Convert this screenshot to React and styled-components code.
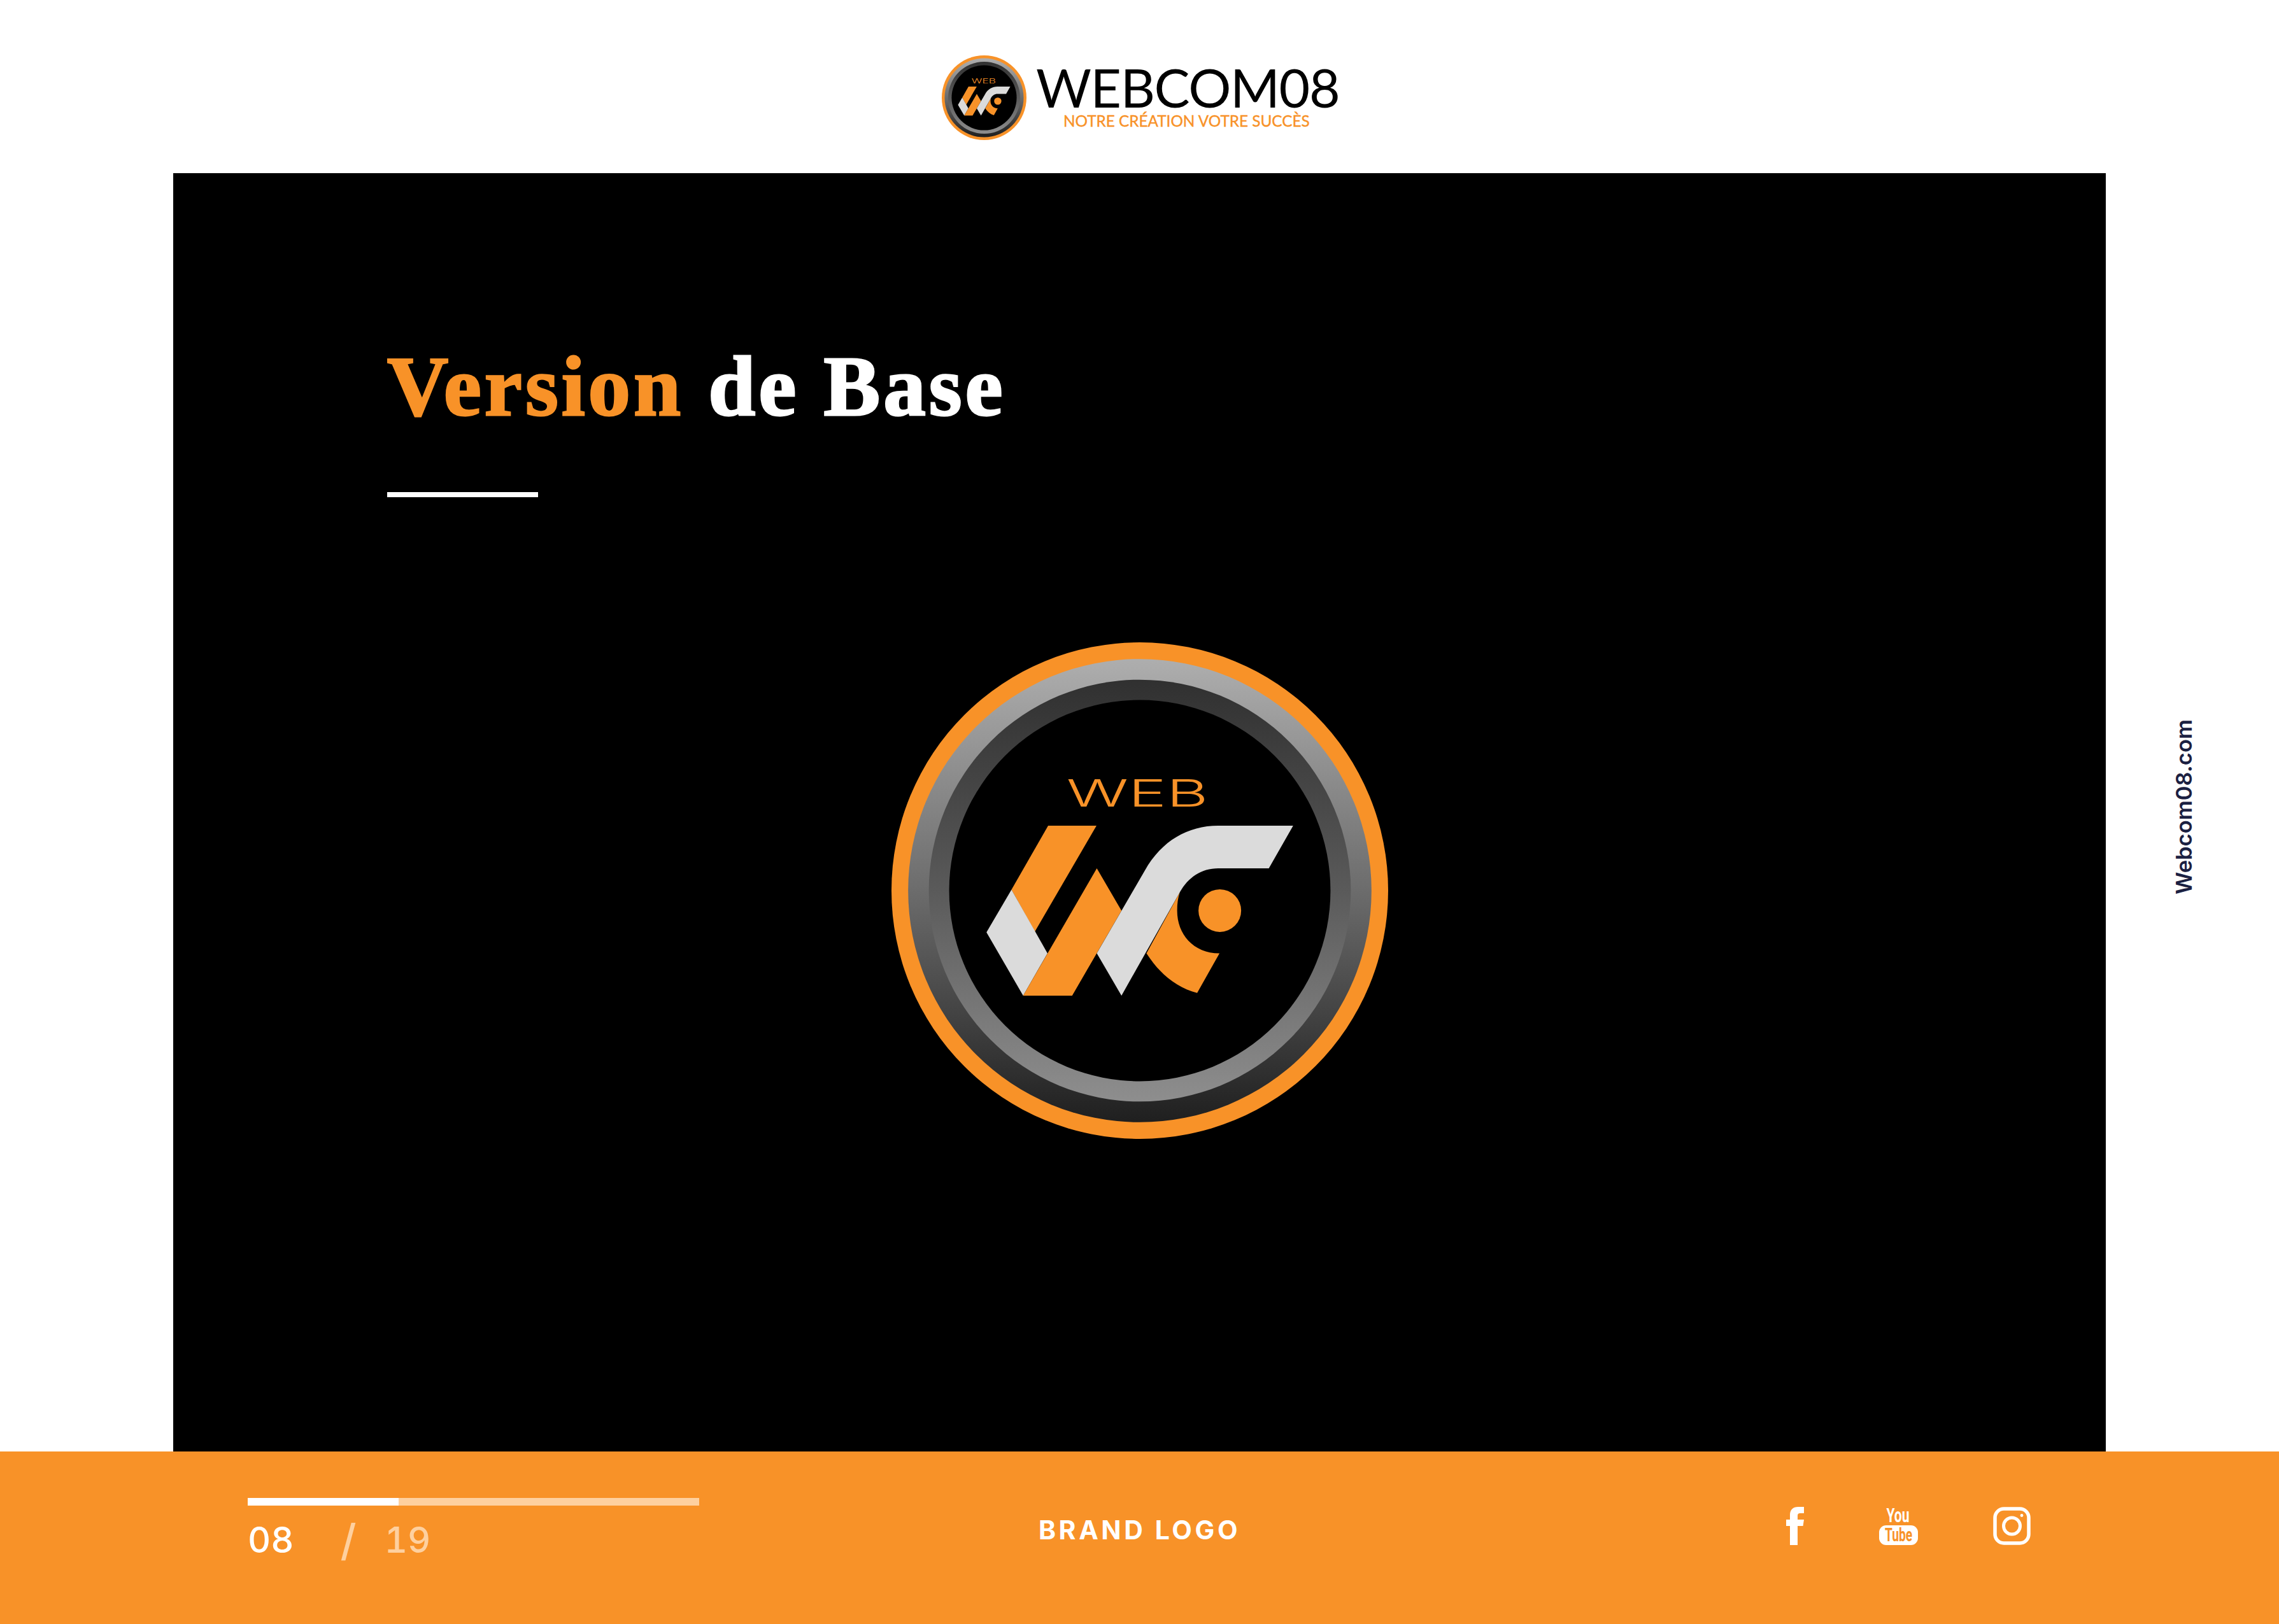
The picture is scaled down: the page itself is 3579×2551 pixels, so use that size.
import React from "react";
import styled, { createGlobalStyle } from "styled-components";

const ORANGE = "#f89228";

const GlobalStyle = createGlobalStyle`
  html, body {
    margin: 0;
    padding: 0;
    background: #fff;
  }
  * {
    box-sizing: border-box;
  }
`;

const Page = styled.div`
  display: grid;
  grid-template-rows: 272px 2008px 271px;
  width: 3579px;
  height: 2551px;
  overflow: hidden;
  background: #fff;
`;

const Header = styled.header`
  display: flex;
  align-items: flex-start;
  padding: 87px 0 0 1479px;
`;

const Brand = styled.div`
  display: flex;
  flex-direction: column;
  margin-left: 15px;
`;

const BrandName = styled.div`
  margin-top: 18px;
  font-family: Lato, sans-serif;
  font-size: 84px;
  font-weight: 400;
  line-height: 64px;
  letter-spacing: -1.4px;
  color: #000;
  white-space: nowrap;
`;

const BrandTagline = styled.div`
  margin: 9px 0 0 43px;
  font-family: Lato, sans-serif;
  font-size: 24.3px;
  font-weight: 400;
  line-height: 24px;
  color: ${ORANGE};
  -webkit-text-stroke: 0.4px currentColor;
  white-space: nowrap;
`;

const Middle = styled.div`
  display: grid;
  grid-template-columns: 272px 3035px 1fr;
`;

const Panel = styled.main`
  grid-column: 2;
  display: flex;
  flex-direction: column;
  padding: 269px 0 0 336px;
  background: #000;
`;

const Title = styled.h1`
  margin: 0;
  font-family: "Liberation Serif", serif;
  font-size: 133px;
  font-weight: 700;
  line-height: 133px;
  letter-spacing: 5px;
  color: #fff;
  -webkit-text-stroke: 3px currentColor;
  white-space: nowrap;
`;

const TitleAccent = styled.span`
  color: ${ORANGE};
`;

const TitleRule = styled.div`
  width: 237px;
  height: 8px;
  margin-top: 99px;
  background: #fff;
`;

const MainLogo = styled.div`
  display: flex;
  justify-content: center;
  margin: 228px 0 0 -336px;
`;

const Side = styled.aside`
  display: flex;
  align-items: center;
  justify-content: center;
  padding: 0 28px 18px 0;
`;

const SideText = styled.span`
  writing-mode: vertical-rl;
  transform: rotate(180deg);
  font-family: Inter, sans-serif;
  font-size: 34.5px;
  font-weight: 600;
  line-height: 35px;
  color: #1b2041;
  white-space: nowrap;
`;

const Footer = styled.footer`
  display: grid;
  grid-template-columns: 1fr auto 1fr;
  background: ${ORANGE};
`;

const Progress = styled.div`
  display: flex;
  flex-direction: column;
  padding: 73px 0 0 389px;
`;

const Track = styled.div`
  width: 709px;
  height: 12px;
  background: #fed09f;
`;

const Fill = styled.div`
  height: 100%;
  background: #fff;
`;

const Pager = styled.div`
  display: flex;
  align-items: center;
  height: 56px;
  margin-top: 26px;
  font-family: Inter, sans-serif;
  font-size: 56px;
  font-weight: 500;
  line-height: 56px;
  font-feature-settings: "tnum";
`;

const PagerCurrent = styled.span`
  color: #fff;
`;

const PagerSlash = styled.span`
  margin-left: 73px;
  font-size: 68px;
  font-weight: 500;
  color: #fed09f;
`;

const PagerTotal = styled.span`
  margin-left: 44px;
  color: #fed09f;
`;

const FooterLabel = styled.div`
  padding-top: 100px;
  font-family: Inter, sans-serif;
  font-size: 41px;
  font-weight: 700;
  line-height: 46px;
  letter-spacing: 4.6px;
  color: #fff;
  white-space: nowrap;
`;

const Socials = styled.div`
  display: flex;
  align-items: flex-start;
  justify-content: flex-end;
  gap: 118px;
  padding: 87px 390px 0 0;
`;

const SocialIcon = styled.svg`
  display: block;
  flex: none;
  overflow: visible;
`;

function WcLogo({ size, id }) {
  return (
    <svg width={size} height={size} viewBox="40 50 1490 1490">
      <defs>
        <linearGradient id={`${id}-outer`} x1="0" y1="0" x2="0" y2="1">
          <stop offset="0" stopColor="#aeaeae" />
          <stop offset="0.5" stopColor="#6c6c6c" />
          <stop offset="1" stopColor="#1f1f1f" />
        </linearGradient>
        <linearGradient id={`${id}-inner`} x1="0" y1="0" x2="0" y2="1">
          <stop offset="0" stopColor="#303030" />
          <stop offset="0.5" stopColor="#5a5a5a" />
          <stop offset="1" stopColor="#8e8e8e" />
        </linearGradient>
      </defs>
      <circle cx="785" cy="795" r="745" fill={ORANGE} />
      <circle cx="785" cy="795" r="695" fill={`url(#${id}-outer)`} />
      <circle cx="785" cy="795" r="633" fill={`url(#${id}-inner)`} />
      <circle cx="785" cy="795" r="572" fill="#000" />
      <text
        x="565"
        y="543"
        textLength="425"
        lengthAdjust="spacingAndGlyphs"
        fontFamily="Inter, sans-serif"
        fontSize="112"
        fontWeight="350"
        fill={ORANGE}
      >
        WEB
      </text>
      <path d="M510 600H655L470 918L400 792Z" fill={ORANGE} />
      <path d="M400 792L508 983L435 1110L325 920Z" fill="#dbdbdb" />
      <path d="M656 728L730 855L582 1110H435Z" fill={ORANGE} />
      <path
        d="M905 800L805 983C845 1045 895 1086 957 1102L1024 983C945 983 897 925 897 855C897 835 899 818 905 800Z"
        fill={ORANGE}
      />
      <path
        d="M1245 600H1020C930 600 850 645 800 735L656 983L730 1110L905 800C930 755 970 728 1020 728H1172Z"
        fill="#dbdbdb"
      />
      <circle cx="1025" cy="855" r="64" fill={ORANGE} />
    </svg>
  );
}

function FacebookIcon() {
  return (
    <SocialIcon width="28" height="60" viewBox="0 0 28 60">
      <path
        d="M6 60V30H0V20H6V13C6 4 11 0 19 0H28V10H22C19 10 18 11.5 18 14V20H28L26.5 30H18V60Z"
        fill="#fff"
      />
    </SocialIcon>
  );
}

function YoutubeIcon() {
  return (
    <SocialIcon width="61" height="60" viewBox="0 0 61 60">
      <text
        x="11.5"
        y="24"
        textLength="36"
        lengthAdjust="spacingAndGlyphs"
        fontFamily="Roboto, sans-serif"
        fontSize="32"
        fontWeight="700"
        fill="#fff"
      >
        You
      </text>
      <rect x="0" y="29" width="61" height="31" rx="11" fill="#fff" />
      <text
        x="9"
        y="54"
        textLength="43"
        lengthAdjust="spacingAndGlyphs"
        fontFamily="Roboto, sans-serif"
        fontSize="30"
        fontWeight="700"
        fill={ORANGE}
      >
        Tube
      </text>
    </SocialIcon>
  );
}

function InstagramIcon() {
  return (
    <SocialIcon width="59" height="60" viewBox="0 0 59 60">
      <rect x="3" y="3" width="53" height="54" rx="14" fill="none" stroke="#fff" strokeWidth="5.5" />
      <circle cx="29.5" cy="30" r="13" fill="none" stroke="#fff" strokeWidth="5" />
      <circle cx="45" cy="13.5" r="2.4" fill="#fff" />
    </SocialIcon>
  );
}

export default function App() {
  return (
    <>
      <GlobalStyle />
      <Page>
        <Header>
          <WcLogo size={133} id="small" />
          <Brand>
            <BrandName>WEBCOM08</BrandName>
            <BrandTagline>NOTRE CRÉATION VOTRE SUCCÈS</BrandTagline>
          </Brand>
        </Header>
        <Middle>
          <Panel>
            <Title>
              <TitleAccent>Version</TitleAccent> de Base
            </Title>
            <TitleRule />
            <MainLogo>
              <WcLogo size={780} id="main" />
            </MainLogo>
          </Panel>
          <Side>
            <SideText>Webcom08.com</SideText>
          </Side>
        </Middle>
        <Footer>
          <Progress>
            <Track>
              <Fill style={{ width: `${(237 / 709) * 100}%` }} />
            </Track>
            <Pager>
              <PagerCurrent>08</PagerCurrent>
              <PagerSlash>/</PagerSlash>
              <PagerTotal>19</PagerTotal>
            </Pager>
          </Progress>
          <FooterLabel>BRAND LOGO</FooterLabel>
          <Socials>
            <FacebookIcon />
            <YoutubeIcon />
            <InstagramIcon />
          </Socials>
        </Footer>
      </Page>
    </>
  );
}
